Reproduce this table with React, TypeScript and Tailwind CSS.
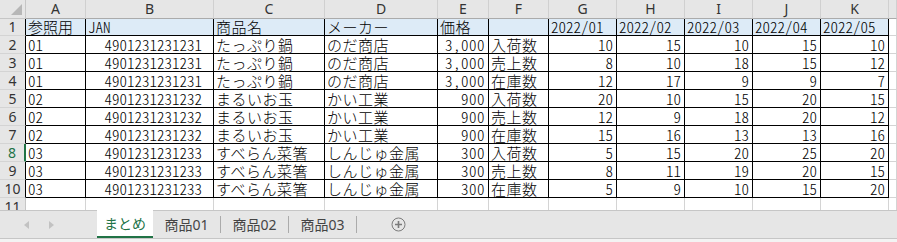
import { Fragment } from "react";

const columns = ["A", "B", "C", "D", "E", "F", "G", "H", "I", "J", "K", ""];

const headerRow = ["参照用", "JAN", "商品名", "メーカー", "価格", "", "2022/01", "2022/02", "2022/03", "2022/04", "2022/05"];

const products = [
  { ref: "01", jan: "4901231231231", name: "たっぷり鍋", maker: "のだ商店", price: "3,000" },
  { ref: "02", jan: "4901231231232", name: "まるいお玉", maker: "かい工業", price: "900" },
  { ref: "03", jan: "4901231231233", name: "すべらん菜箸", maker: "しんじゅ金属", price: "300" },
];

const kinds = ["入荷数", "売上数", "在庫数"];

const values = [
  [10, 15, 10, 15, 10],
  [8, 10, 18, 15, 12],
  [12, 17, 9, 9, 7],
  [20, 10, 15, 20, 15],
  [12, 9, 18, 20, 12],
  [15, 16, 13, 13, 16],
  [5, 15, 20, 25, 20],
  [8, 11, 19, 20, 15],
  [5, 9, 10, 15, 20],
];

const rows = values.map((nums, i) => {
  const p = products[Math.floor(i / 3)];
  return [p.ref, p.jan, p.name, p.maker, p.price, kinds[i % 3], ...nums.map(String)];
});

// 右寄せする列 (B, E, G..K)
const rightCols = [1, 4, 6, 7, 8, 9, 10];

const cellFont = "font-['Noto_Sans_CJK_JP',sans-serif] font-light text-[15px] [font-feature-settings:'hwid'] text-black";
const uiFont = "font-['Noto_Sans','Noto_Sans_CJK_JP',sans-serif]";

function CornerCell() {
  return (
    <div className="flex items-end justify-end border-r border-b border-[#c6c6c6] bg-[#e6e6e6] pr-[3px] pb-[3px]">
      <svg width="11" height="11" viewBox="0 0 11 11">
        <polygon points="11,0 11,11 0,11" fill="#b7b7b7" />
      </svg>
    </div>
  );
}

function RowHeader({ n, active }: { n: number; active?: boolean }) {
  return (
    <div
      className={`flex items-center justify-center border-b border-[#d4d4d4] bg-[#e6e6e6] text-[14px] leading-none ${uiFont} ${
        active ? "border-r-2 border-r-[#217346] text-[#217346]" : n <= 10 ? "border-r border-r-black text-[#333]" : "border-r border-r-[#c6c6c6] text-[#333]"
      }`}
    >
      {n}
    </div>
  );
}

function Cell({ text, col, head }: { text: string; col: number; head?: boolean }) {
  const right = !head && rightCols.includes(col);
  return (
    <div
      className={`flex items-end overflow-hidden whitespace-nowrap border-r border-b border-black leading-[16px] ${cellFont} ${
        head ? "bg-[#ddebf7]" : "bg-white"
      } ${right ? "justify-end" : "justify-start pl-[2px]"} ${right && col === 1 ? "pr-[11px]" : right ? "pr-[3px]" : ""} ${
        col >= 2 && col <= 5 ? "tracking-[0.5px]" : ""
      }`}
    >
      {text}
    </div>
  );
}

function Sheet() {
  return (
    <div className="grid h-[210px] grid-cols-[26px_60px_128px_111px_113px_51px_60px_68px_68px_68px_68px_68px_8px] grid-rows-[19px_17px_repeat(10,18px)] overflow-hidden bg-white">
      <CornerCell />
      {columns.map((c, i) => (
        <div
          key={"col" + i}
          className={`flex items-center justify-center border-r border-b border-r-[#d0d0d0] border-b-[#ababab] bg-[#e6e6e6] text-[14px] leading-none text-[#333] ${uiFont}`}
        >
          {c}
        </div>
      ))}

      <RowHeader n={1} />
      {headerRow.map((h, i) => (
        <Cell key={"h" + i} text={h} col={i} head />
      ))}
      <div className="border-r border-b border-[#d4d4d4]" />

      {rows.map((r, ri) => (
        <Fragment key={"r" + ri}>
          <RowHeader n={ri + 2} active={ri + 2 === 8} />
          {r.map((v, ci) => (
            <Cell key={ci} text={v} col={ci} />
          ))}
          <div className="border-r border-b border-[#d4d4d4]" />
        </Fragment>
      ))}

      <RowHeader n={11} />
      {columns.map((_, i) => (
        <div key={"e" + i} className="border-r border-b border-[#d4d4d4]" />
      ))}
    </div>
  );
}

function TabBar() {
  const tabs = ["商品01", "商品02", "商品03"];
  return (
    <div className="flex h-[29px] items-stretch border-t border-b border-[#c6c6c6] bg-[#e6e6e6]">
      <div className="flex w-[97px] items-center gap-[20px] pl-[24px]">
        <svg width="5" height="8" viewBox="0 0 5 8">
          <polygon points="5,0 5,8 0,4" fill="#c2c2c2" />
        </svg>
        <svg width="5" height="8" viewBox="0 0 5 8">
          <polygon points="0,0 0,8 5,4" fill="#c2c2c2" />
        </svg>
      </div>
      <div className={`-mt-px flex w-[56px] items-center justify-center border-b-2 border-[#217346] bg-white text-[14px] text-[#217346] ${uiFont}`}>
        まとめ
      </div>
      {tabs.map((t) => (
        <div key={t} className="flex w-[68px] items-center">
          <div className={`flex flex-1 items-center justify-center text-[14px] text-[#444] ${uiFont}`}>{t}</div>
          <div className="h-[17px] w-px bg-[#ababab]" />
        </div>
      ))}
      <div className="flex w-[82px] items-center justify-center">
        <svg width="15" height="15" viewBox="0 0 15 15">
          <circle cx="7.5" cy="7.5" r="6.5" fill="none" stroke="#7b7b7b" strokeWidth="1" />
          <path d="M7.5 4v7M4 7.5h7" stroke="#7b7b7b" strokeWidth="1.6" />
        </svg>
      </div>
    </div>
  );
}

export default function App() {
  return (
    <div className="flex h-[242px] w-[897px] flex-col overflow-hidden bg-[#f3f3f3]">
      <Sheet />
      <TabBar />
    </div>
  );
}
